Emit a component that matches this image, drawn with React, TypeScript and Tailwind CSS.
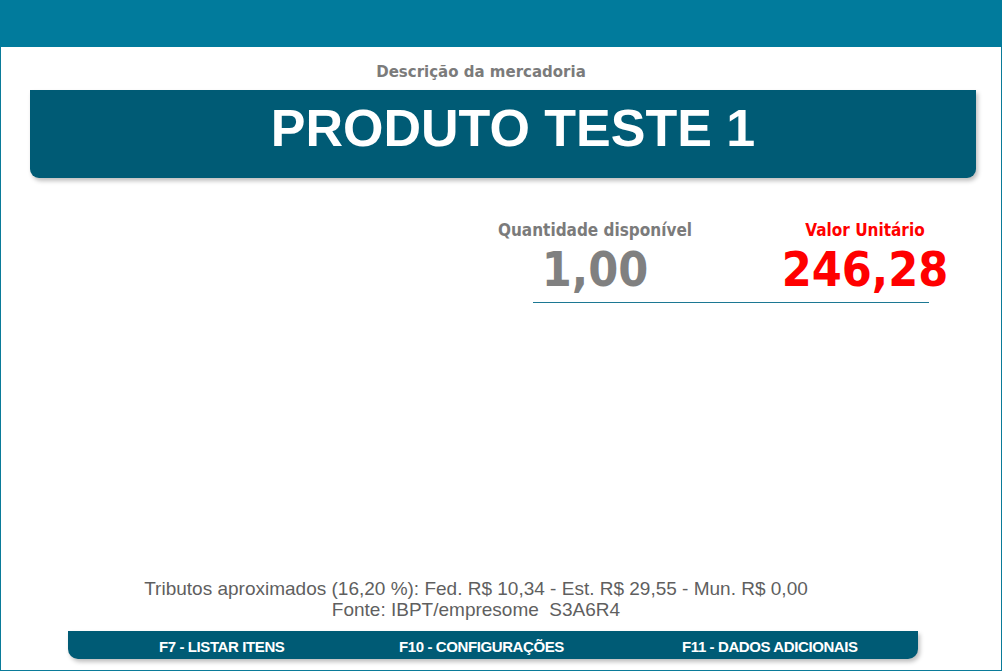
export default function App() {
  const tahoma = { fontFamily: '"DejaVu Sans Condensed", "DejaVu Sans", sans-serif' }

  return (
    <div className="w-[1004px] h-[672px] bg-white">
      <div className="w-[1002px] h-[671px] border border-[#0a7b99] flex flex-col bg-white">
        {/* barra superior */}
        <div className="h-[47px] -mx-px -mt-px bg-[#017b9c] shrink-0"></div>

        {/* descrição */}
        <p
          className="mt-[15px] h-[20px] leading-[20px] text-center text-[15px] font-bold text-[#7b7b7b] pr-[40px]"
          style={{ fontFamily: '"DejaVu Sans", sans-serif' }}
        >
          Descrição da mercadoria
        </p>

        <div className="mt-[8px] ml-[29px] w-[946px] h-[88px] bg-[#005b75] rounded-b-[9px] shadow-[2px_3px_4px_rgba(0,0,0,0.25)] flex items-center justify-center pl-[20px] pb-[12px]">
          <h1
            className="text-white font-bold text-[52px] leading-none"
            style={{ fontFamily: '"Liberation Sans", Arial, sans-serif' }}
          >
            PRODUTO TESTE 1
          </h1>
        </div>

        {/* quantidade e valor */}
        <div className="mt-[42px] ml-[494px] flex" style={tahoma}>
          <div className="w-[200px] flex flex-col items-center">
            <span className="text-[17px] font-bold text-[#7b7b7b] leading-[20px]">Quantidade disponível</span>
            <span className="text-[48px] font-bold text-[#808080] leading-[52px] mt-[3px]">1,00</span>
          </div>
          <div className="ml-[70px] w-[200px] flex flex-col items-center">
            <span className="text-[17px] font-bold text-[#ff0000] leading-[20px]">Valor Unitário</span>
            <span className="text-[48px] font-bold text-[#ff0000] leading-[52px] mt-[3px]">246,28</span>
          </div>
        </div>
        <div className="mt-[7px] ml-[532px] w-[396px] h-px bg-[#1c7893]"></div>

        <div className="flex-1"></div>

        {/* tributos */}
        <div
          className="text-center text-[19px] leading-[21px] text-[#5f5f5f] pr-[50px]"
          style={{ fontFamily: '"Liberation Sans", Arial, sans-serif' }}
        >
          <p>Tributos aproximados (16,20 %): Fed. R$ 10,34 - Est. R$ 29,55 - Mun. R$ 0,00</p>
          <p className="whitespace-pre">Fonte: IBPT/empresome  S3A6R4</p>
        </div>

        {/* rodapé */}
        <div
          className="mt-[11px] mb-[11px] ml-[67px] w-[850px] h-[28px] bg-[#005b75] rounded-b-[10px] shadow-[2px_3px_4px_rgba(0,0,0,0.25)] flex items-center pl-[91px] text-white text-[15px] font-bold tracking-[-0.4px]"
          style={{ fontFamily: '"Liberation Sans", Arial, sans-serif' }}
        >
          <span className="w-[240px] pt-[5px]">F7 - LISTAR ITENS</span>
          <span className="w-[283px] pt-[5px]">F10 - CONFIGURAÇÕES</span>
          <span className="pt-[5px]">F11 - DADOS ADICIONAIS</span>
        </div>
      </div>
    </div>
  )
}
